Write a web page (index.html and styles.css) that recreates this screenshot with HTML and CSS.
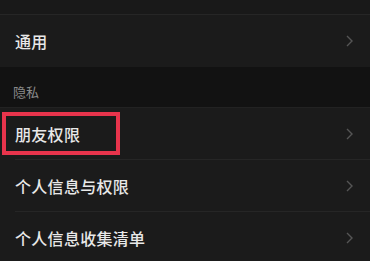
FILE: index.html
```html
<!DOCTYPE html>
<html lang="zh-CN">
<head>
<meta charset="utf-8">
<link rel="stylesheet" href="styles.css">
</head>
<body>
<div class="screen">
  <div class="top-band"></div>
  <div class="row row-full">
    <span class="label">通用</span>
    <svg class="chev" width="7" height="12" viewBox="0 0 7 12"><polyline points="1,1 6,6 1,11" fill="none" stroke="#555" stroke-width="1.4"/></svg>
  </div>
  <div class="section-header"><span>隐私</span></div>
  <div class="row row-highlight">
    <span class="label">朋友权限</span>
    <svg class="chev" width="7" height="12" viewBox="0 0 7 12"><polyline points="1,1 6,6 1,11" fill="none" stroke="#555" stroke-width="1.4"/></svg>
    <div class="highlight-box"></div>
  </div>
  <div class="row">
    <span class="label">个人信息与权限</span>
    <svg class="chev" width="7" height="12" viewBox="0 0 7 12"><polyline points="1,1 6,6 1,11" fill="none" stroke="#555" stroke-width="1.4"/></svg>
  </div>
  <div class="row row-last">
    <span class="label">个人信息收集清单</span>
    <svg class="chev" width="7" height="12" viewBox="0 0 7 12"><polyline points="1,1 6,6 1,11" fill="none" stroke="#555" stroke-width="1.4"/></svg>
  </div>
</div>
</body>
</html>
```
FILE: styles.css
```css
html, body {
  margin: 0;
  padding: 0;
  background: #1b1b1b;
}
.screen {
  width: 370px;
  height: 261px;
  overflow: hidden;
  font-family: "Noto Sans CJK SC", "Noto Sans", sans-serif;
  background: #1b1b1b;
}
.top-band {
  height: 14px;
  border-bottom: 1px solid #262626;
  background: #191919;
}
.row {
  position: relative;
  height: 52px;
  box-sizing: border-box;
  display: flex;
  align-items: center;
  justify-content: space-between;
  padding: 0 17px 0 15px;
  background: #1b1b1b;
}
.row::after {
  content: "";
  position: absolute;
  left: 15px;
  right: 0;
  bottom: 0;
  height: 1px;
  background: #262626;
}
.row-full::after,
.row-last::after {
  display: none;
}
.label {
  font-size: 16px;
  font-weight: 500;
  color: #e8e8e8;
  letter-spacing: 0.3px;
}
.chev {
  display: block;
}
.section-header {
  height: 41px;
  box-sizing: border-box;
  background: #121212;
  border-bottom: 1px solid #222;
  display: flex;
  align-items: flex-end;
  padding: 0 0 6px 13px;
}
.section-header span {
  font-size: 13px;
  color: #8a8a8a;
}
.highlight-box {
  position: absolute;
  left: 2px;
  top: 4px;
  width: 118px;
  height: 43px;
  box-sizing: border-box;
  border: 4px solid #e8344c;
}
```
